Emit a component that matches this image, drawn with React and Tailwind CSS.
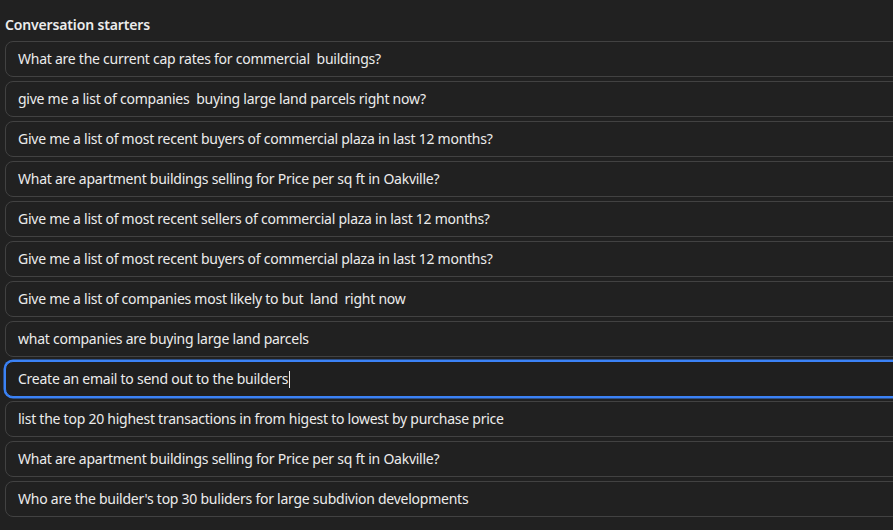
import React from "react";

const starters = [
  "What are the current cap rates for commercial  buildings?",
  "give me a list of companies  buying large land parcels right now?",
  "Give me a list of most recent buyers of commercial plaza in last 12 months?",
  "What are apartment buildings selling for Price per sq ft in Oakville?",
  "Give me a list of most recent sellers of commercial plaza in last 12 months?",
  "Give me a list of most recent buyers of commercial plaza in last 12 months?",
  "Give me a list of companies most likely to but  land  right now",
  "what companies are buying large land parcels",
  "Create an email to send out to the builders",
  "list the top 20 highest transactions in from higest to lowest by purchase price",
  "What are apartment buildings selling for Price per sq ft in Oakville?",
  "Who are the builder's top 30 buliders for large subdivion developments",
];

const FOCUSED = 8;

const App = () => {
  return (
    <div
      className="w-[893px] h-[530px] overflow-hidden bg-[#212121] text-[#ececec]"
      style={{ fontFamily: '"Noto Sans", "Open Sans", sans-serif' }}
    >
      <div className="pl-[5px] pt-[15px]">
        <h2 className="text-sm leading-5 font-semibold tracking-[-0.15px] mb-[6px]">
          Conversation starters
        </h2>
        <div className="flex flex-col gap-1 w-[920px]">
          {starters.map((text, i) =>
            i === FOCUSED ? (
              <div
                key={i}
                className="h-9 flex items-center pl-[12px] rounded-lg border border-[#3b82f6] ring-[1.5px] ring-[#3b82f6] bg-[#1f1f1f] text-sm tracking-[-0.25px] whitespace-pre"
              >
                {text}
                <span className="inline-block w-px h-[17px] ml-px bg-[#ececec]" />
              </div>
            ) : (
              <div
                key={i}
                className="h-9 flex items-center pl-[12px] rounded-lg border border-[#424242] bg-[#212121] text-sm tracking-[-0.25px] whitespace-pre"
              >
                {text}
              </div>
            )
          )}
        </div>
      </div>
    </div>
  );
};

export default App;
